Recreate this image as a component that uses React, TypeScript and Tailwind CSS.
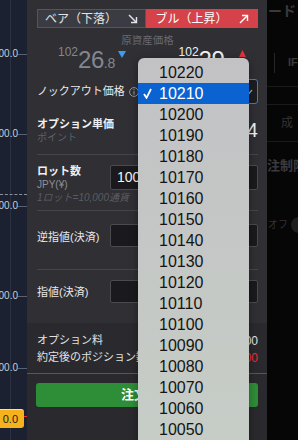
import React from "react";

const prices = [10220, 10210, 10200, 10190, 10180, 10170, 10160, 10150, 10140, 10130, 10120, 10110, 10100, 10090, 10080, 10070, 10060, 10050];

function ArrowDown({ color }: { color: string }) {
  return (
    <svg width="10" height="10" viewBox="0 0 10 10" fill="none" stroke={color} strokeWidth="1.4">
      <line x1="1" y1="1" x2="8.5" y2="8.5" />
      <polyline points="3,8.5 8.5,8.5 8.5,3" />
    </svg>
  );
}

function ArrowUp({ color }: { color: string }) {
  return (
    <svg width="10" height="10" viewBox="0 0 10 10" fill="none" stroke={color} strokeWidth="1.4">
      <line x1="1" y1="9" x2="8.5" y2="1.5" />
      <polyline points="3,1.5 8.5,1.5 8.5,7" />
    </svg>
  );
}

function AxisLabel({ top, text }: { top: string; text: string }) {
  return (
    <div className={"absolute left-0 right-0 h-[14px] flex items-center " + top}>
      <span className="w-[18px] text-[10px] leading-none text-[#c9ced6] whitespace-nowrap overflow-hidden flex justify-end">{text}</span>
      <span className="flex-1 h-px bg-[#586072]" />
    </div>
  );
}

function Chart() {
  return (
    <div className="relative w-[27px] h-full shrink-0 bg-[#1b2130] overflow-hidden">
      <div className="absolute left-[10px] top-0 bottom-0 w-px bg-[#2a3242]" />
      <AxisLabel top="top-[47px]" text="10300.0" />
      <AxisLabel top="top-[127px]" text="10200.0" />
      <div className="absolute left-0 right-0 top-[194px] border-t border-dashed border-[#8a909c]" />
      <AxisLabel top="top-[199px]" text="10100.0" />
      <AxisLabel top="top-[289px]" text="10000.0" />
      <AxisLabel top="top-[361px]" text="9900.0" />
      <div className="absolute left-0 top-[409px] w-[24px] h-[19px] bg-[#f5b21d] border-t border-[#e6e2d6] rounded-r-[3px] flex items-center justify-end pr-[6px] text-[11px] leading-none text-[#1a1a1a]">
        0.0
      </div>
      <div className="absolute left-[24px] right-0 top-[416px] h-px bg-[#e03535]" />
    </div>
  );
}

function Panel() {
  return (
    <div className="w-[240px] h-full shrink-0 flex flex-col bg-[#2f2f34]">
      <div className="pl-[10px] pr-[9px] flex flex-col">
        <div className="mt-[9px] h-[19px] flex">
          <div className="w-[109px] flex items-center justify-center gap-[11px] bg-[#3b3c43] border border-[#55565d] text-[12px] leading-none text-[#e4e4e6]">
            <span>ベア（下落）</span>
            <ArrowDown color="#e4e4e6" />
          </div>
          <div className="flex-1 flex items-center justify-center gap-[11px] bg-[#d6424a] text-[12px] leading-none text-white">
            <span>ブル（上昇）</span>
            <ArrowUp color="#ffffff" />
          </div>
        </div>
        <div className="mt-[6px] h-[12px] text-center text-[10.5px] leading-[12px] text-[#6a6a71]">原資産価格</div>
        <div className="h-[24px] flex items-start leading-none">
          <div className="ml-[21px] mt-[2px] flex items-baseline text-[#86868d]">
            <span className="text-[12px] relative top-[-12px]">102</span>
            <span className="text-[24px] tracking-[-0.5px]">26</span>
            <span className="text-[14px]">.8</span>
          </div>
          <svg className="ml-[3px] mt-[5px]" width="8" height="7" viewBox="0 0 8 7">
            <polygon points="0,0 8,0 4,7" fill="#3d9cf0" />
          </svg>
          <div className="ml-auto mt-[2px] flex items-baseline text-[#f2f2f2]">
            <span className="text-[12px] relative top-[-12px]">102</span>
            <span className="text-[24px] tracking-[-0.5px]">29</span>
            <span className="text-[14px]">.4</span>
          </div>
          <svg className="ml-[3px] mt-[4px] mr-[12px]" width="7" height="7" viewBox="0 0 7 7">
            <polygon points="3.5,0 7,7 0,7" fill="#e5323b" />
          </svg>
        </div>
        <div className="mt-[9px] h-[25px] flex items-center">
          <span className="text-[11px] leading-none text-[#e8e8ea] whitespace-nowrap">ノックアウト価格</span>
          <svg className="ml-[4px] shrink-0" width="10" height="10" viewBox="0 0 10 10" fill="none">
            <circle cx="5" cy="5" r="4.4" stroke="#a0a0a6" strokeWidth="0.9" />
            <line x1="5" y1="4.2" x2="5" y2="7.6" stroke="#a0a0a6" strokeWidth="1" />
            <circle cx="5" cy="2.7" r="0.6" fill="#a0a0a6" />
          </svg>
          <div className="ml-auto w-[115px] h-full shrink-0 rounded-[3px] border border-[#2f80e2] bg-[#1d1d21] flex items-center justify-end pr-[4px]">
            <svg width="8" height="6" viewBox="0 0 8 6" fill="none" stroke="#9aa3b0" strokeWidth="1.3">
              <polyline points="1,1 4,4.5 7,1" />
            </svg>
          </div>
        </div>
        <div className="mt-[12px] pb-[10px] border-b border-[#45454b] flex items-center">
          <div className="flex flex-col">
            <span className="h-[16px] leading-[16px] text-[11px] font-bold text-[#f0f0f2] whitespace-nowrap">オプション単価</span>
            <span className="h-[12px] leading-[12px] text-[10px] text-[#606067]">ポイント</span>
          </div>
          <span className="ml-auto text-[20px] leading-none text-[#f0f0f2]">24</span>
        </div>
        <div className="pt-[9px] pb-[4px] border-b border-[#45454b] flex flex-col">
          <div className="flex items-start">
            <div className="w-[73px] flex flex-col">
              <span className="h-[15px] leading-[15px] text-[11px] font-bold text-[#f0f0f2]">ロット数</span>
              <span className="h-[11px] leading-[11px] text-[10px] text-[#909097]">JPY(¥)</span>
            </div>
            <div className="mt-[1px] h-[25px] flex-1 bg-[#1a1a1e] border border-[#4a4a50] rounded-[2px] flex items-center pl-[6px] text-[14px] text-[#f4f4f4]">
              100
            </div>
          </div>
          <span className="h-[16px] leading-[16px] text-[10px] italic text-[#5c5c63] whitespace-nowrap">1ロット=10,000通貨</span>
        </div>
        <div className="pt-[13px] pb-[22px] border-b border-[#45454b] flex items-center">
          <span className="w-[73px] mt-[3px] text-[11px] leading-none text-[#e8e8ea] whitespace-nowrap">逆指値(決済)</span>
          <div className="h-[23px] flex-1 bg-[#1a1a1e] border border-[#4a4a50] rounded-[2px]" />
        </div>
        <div className="pt-[10px] pb-[20px] flex items-center">
          <span className="w-[73px] mt-[1px] text-[11px] leading-none text-[#e8e8ea] whitespace-nowrap">指値(決済)</span>
          <div className="h-[23px] flex-1 bg-[#1a1a1e] border border-[#4a4a50] rounded-[2px]" />
        </div>
      </div>
      <div className="bg-[#2a2a2e] pl-[10px] pr-[9px] pt-[9px] pb-[7px] border-b border-[#56565c] flex flex-col">
        <div className="h-[17px] flex items-center justify-between text-[11px] leading-none">
          <span className="text-[#e2e2e4]">オプション料</span>
          <span className="text-[#e2e2e4] text-[12px]">2,400</span>
        </div>
        <div className="h-[17px] flex items-center justify-between text-[11px] leading-none">
          <span className="text-[#e2e2e4] whitespace-nowrap">約定後のポジション数</span>
          <span className="text-[#ee2f38] text-[12px]">-100</span>
        </div>
      </div>
      <div className="flex-1 bg-[#2a2a2e] px-[9px] pt-[9px]">
        <div className="h-[24px] rounded-[3px] bg-[#2e8d37] flex items-center justify-center text-[13px] font-bold text-white">
          注文確認
        </div>
      </div>
    </div>
  );
}

function RightSide() {
  return (
    <div className="flex-1 h-full bg-[#060606] flex flex-col text-[#3a3a3d] overflow-hidden">
      <span className="mt-[3px] ml-[1px] h-[16px] leading-[16px] text-[14px] font-bold whitespace-nowrap">ード</span>
      <div className="mt-[31px] h-[37px] border-b border-[#1a1a1c] flex items-start">
        <div className="mt-[3px] w-[8px] h-[20px] border-r border-[#262628]" />
        <span className="mt-[7px] ml-[13px] text-[11px] leading-none font-bold">IF</span>
      </div>
      <div className="mt-[17px] h-[38px] border-y border-[#1a1a1c] flex items-center">
        <span className="ml-[14px] text-[12px] leading-none text-[#333336]">成</span>
      </div>
      <span className="mt-[17px] text-[13px] leading-none font-bold whitespace-nowrap">注制限</span>
      <div className="mt-[44px] h-[18px] flex items-center">
        <span className="ml-[1px] text-[10px] leading-none text-[#333336] whitespace-nowrap">オフ</span>
        <span className="ml-[3px] w-[16px] h-[16px] rounded-full bg-[#1e1e20] shrink-0" />
      </div>
    </div>
  );
}

function Popup() {
  return (
    <div className="absolute left-[138px] top-[58px] w-[111px] h-[400px] rounded-[6px] bg-linear-to-b from-[#c2c2c5] to-[#c6cdc6] pt-[4px] overflow-hidden shadow-[0_2px_8px_rgba(0,0,0,0.35)]">
      {prices.map((p) => {
        const sel = p === 10210;
        return (
          <div
            key={p}
            className={sel ? "relative h-[21px] flex items-center bg-[#0b63d2] text-white" : "relative h-[21px] flex items-center text-[#141414]"}
          >
            {sel && (
              <svg className="absolute left-[5px] top-[5px]" width="9" height="11" viewBox="0 0 9 11" fill="none" stroke="#ffffff" strokeWidth="1.8">
                <polyline points="1,6 3.5,9.8 8,1" />
              </svg>
            )}
            <span className="pl-[21px] text-[16px] leading-none">{p}</span>
          </div>
        );
      })}
    </div>
  );
}

export default function App() {
  return (
    <div className="relative flex w-[298px] h-[440px] overflow-hidden bg-black font-[family-name:Liberation_Sans,Noto_Sans_CJK_JP,sans-serif]">
      <Chart />
      <Panel />
      <RightSide />
      <Popup />
    </div>
  );
}
